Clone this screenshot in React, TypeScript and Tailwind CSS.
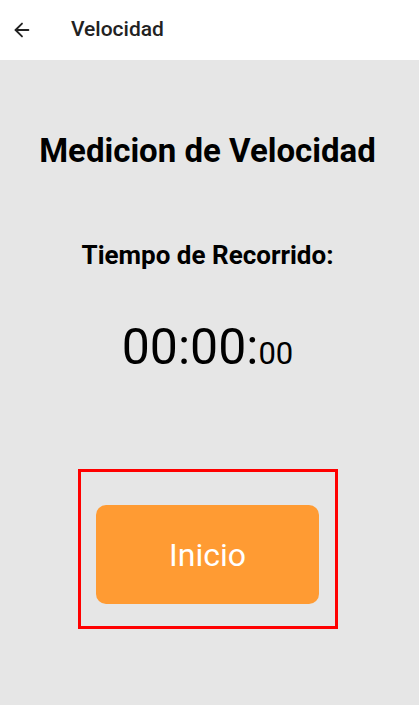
import { ArrowLeft } from "lucide-react";

export default function App() {
  return (
    <main
      className="flex min-h-[705px] w-full flex-col bg-[#e6e6e6]"
      style={{ fontFamily: "Roboto, 'Noto Sans', sans-serif" }}
    >
      <header className="flex h-[60px] items-center bg-white">
        <button className="ml-[10px] flex h-6 w-6 items-center justify-center text-[#222]">
          <ArrowLeft size={22} strokeWidth={2} />
        </button>
        <h1 className="ml-[37px] text-[21px] font-medium text-[#222]">Velocidad</h1>
      </header>

      <section className="flex flex-col items-center pr-[4px]">
        <h2 className="mt-[74px] text-[33px] font-bold leading-none text-black">
          Medicion de Velocidad
        </h2>
        <p className="mt-[75px] text-[26px] font-bold leading-none text-black">
          Tiempo de Recorrido:
        </p>
        <div className="mt-[54px] flex items-baseline leading-none text-black">
          <span className="text-[50px]">00:00:</span>
          <span className="text-[31px]">00</span>
        </div>

        <div className="mt-[97px] flex h-[160px] w-[260px] flex-col items-center border-[3px] border-[#ff0000]">
          <button className="mt-[33px] flex h-[99px] w-[223px] items-center justify-center rounded-[10px] bg-[#ff9b33] text-[32px] text-white">
            Inicio
          </button>
        </div>
      </section>
    </main>
  );
}
